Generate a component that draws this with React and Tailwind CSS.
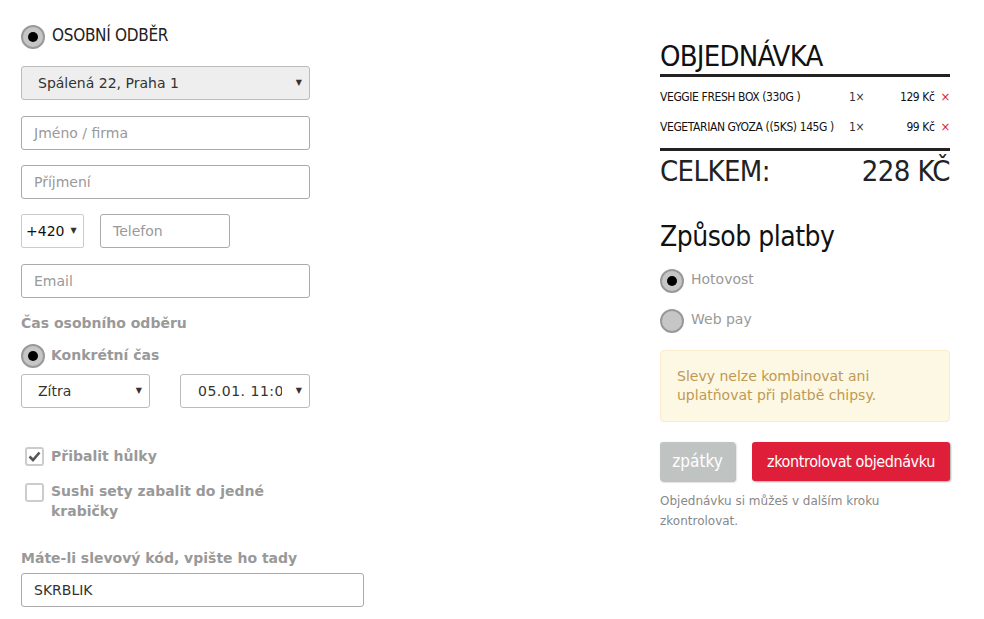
import React from "react";

const cond = "font-['DejaVu_Sans_Condensed','Roboto',sans-serif]";
const body = "font-['DejaVu_Sans','Verdana',sans-serif]";

const Radio = ({ checked }) => (
  <div className="w-6 h-6 shrink-0 rounded-full border-2 border-[#999] bg-[#c6c6c6] flex items-center justify-center">
    {checked && <div className="w-[10px] h-[10px] rounded-full bg-black" />}
  </div>
);

const Checkbox = ({ checked }) => (
  <div className="w-[19px] h-[19px] shrink-0 rounded-[3px] border-2 border-[#ccc] bg-white flex items-center justify-center">
    {checked && (
      <svg width="13" height="11" viewBox="0 0 13 11">
        <path d="M1.5 5.5 L5 9 L11.5 1.5" fill="none" stroke="#555" strokeWidth="2.6" />
      </svg>
    )}
  </div>
);

const Arrow = () => (
  <span className="text-[8px] text-[#333] leading-none">▼</span>
);

const Select = ({ children, className = "" }) => (
  <div
    className={`h-[34px] border border-[#bbb] rounded-[3px] flex items-center justify-between text-[14px] text-[#333] ${className}`}
  >
    {children}
  </div>
);

const Input = ({ placeholder, value, className = "w-[289px]" }) => (
  <div
    className={`h-[34px] border border-[#aaa] rounded-[3px] flex items-center px-3 text-[14px] ${
      value ? "text-[#333]" : "text-[#999]"
    } ${className}`}
  >
    {value || placeholder}
  </div>
);

export default function App() {
  return (
    <div className={`w-[984px] h-[619px] bg-white flex overflow-hidden ${body}`}>
      {/* left: contact form */}
      <div className="ml-[21px] w-[343px] flex flex-col">
        <div className="mt-[25px] flex items-center gap-[7px]">
          <Radio checked />
          <span className={`${cond} text-[17px] text-[#222] tracking-[-0.3px] -mt-[3px]`}>
            OSOBNÍ ODBĚR
          </span>
        </div>

        <Select className="mt-[17px] w-[289px] bg-[#eee] pl-[16px] pr-[7px]">
          <span>Spálená 22, Praha 1</span>
          <Arrow />
        </Select>

        <Input placeholder="Jméno / firma" className="mt-4 w-[289px]" />
        <Input placeholder="Příjmení" className="mt-[15px] w-[289px]" />

        <div className="mt-[15px] flex gap-[16px]">
          <div className="h-[34px] w-[63px] border border-[#ccc] rounded-[2px] flex items-center gap-[6px] pl-[4px] text-[14px] text-[#111]">
            <span>+420</span>
            <Arrow />
          </div>
          <Input placeholder="Telefon" className="w-[130px]" />
        </div>

        <Input placeholder="Email" className="mt-[16px] w-[289px]" />

        <div className="mt-[16px] text-[14px] font-bold text-[#999] leading-[18px]">
          Čas osobního odběru
        </div>

        <div className="mt-[12px] flex items-center gap-[6px]">
          <Radio checked />
          <span className="text-[14px] font-bold text-[#999] -mt-[2px]">Konkrétní čas</span>
        </div>

        <div className="mt-[6px] flex gap-[30px]">
          <Select className="w-[129px] h-[33px] pl-[16px] pr-[7px]">
            <span>Zítra</span>
            <Arrow />
          </Select>
          <Select className="w-[130px] h-[33px] pl-[17px] pr-[7px]">
            <span className="tracking-[0.5px] w-[84px] overflow-hidden whitespace-nowrap">05.01. 11:00</span>
            <Arrow />
          </Select>
        </div>

        <div className="mt-[38px] ml-[4px] flex items-center gap-[7px]">
          <Checkbox checked />
          <span className="text-[14px] font-bold text-[#999] leading-[20px]">Přibalit hůlky</span>
        </div>

        <div className="mt-[15px] ml-[4px] flex items-start gap-[7px]">
          <div className="mt-[2px]">
            <Checkbox />
          </div>
          <span className="text-[14px] font-bold text-[#999] leading-[20px] w-[230px]">
            Sushi sety zabalit do jedné krabičky
          </span>
        </div>

        <div className="mt-[28px] text-[14px] font-bold text-[#999] leading-[18px]">
          Máte-li slevový kód, vpište ho tady
        </div>
        <Input value="SKRBLIK" className="mt-[6px] w-[343px]" />
      </div>

      {/* right: order summary */}
      <div className="ml-auto mr-[34px] w-[290px] flex flex-col">
        <h1 className={`${cond} mt-[40px] text-[29px] leading-[33px] text-[#111] tracking-[-0.8px]`}>
          OBJEDNÁVKA
        </h1>
        <div className="mt-[1px] h-[3px] bg-[#222]" />

        <div className={`${cond} mt-[11px] flex flex-col gap-[12px] text-[12px] text-[#111] tracking-[-0.4px]`}>
          {[
            ["VEGGIE FRESH BOX (330G )", "129 Kč"],
            ["VEGETARIAN GYOZA ((5KS) 145G )", "99 Kč"],
          ].map(([name, price]) => (
            <div key={name} className="flex items-center h-[18px]">
              <span className="w-[189px] whitespace-nowrap">{name}</span>
              <span className="text-[#333]">1×</span>
              <span className="ml-auto">{price}</span>
              <span className="ml-[6px] text-[#e02030] text-[13px]">×</span>
            </div>
          ))}
        </div>

        <div className="mt-[12px] h-[3px] bg-[#222]" />

        <div className={`${cond} mt-[3px] flex justify-between text-[29px] leading-[34px] text-[#222] tracking-[-0.6px]`}>
          <span>CELKEM:</span>
          <span>228 KČ</span>
        </div>

        <h2 className={`${cond} mt-[33px] text-[28px] leading-[32px] text-[#111] tracking-[-0.5px]`}>
          Způsob platby
        </h2>

        <div className="mt-[16px] flex items-center gap-[7px]">
          <Radio checked />
          <span className="text-[14px] text-[#999] -mt-[4px]">Hotovost</span>
        </div>
        <div className="mt-[16px] flex items-center gap-[7px]">
          <Radio />
          <span className="text-[14px] text-[#999] -mt-[4px]">Web pay</span>
        </div>

        <div className="mt-[17px] bg-[#fcf8e3] border border-[#faebcc] rounded-[4px] px-[16px] py-[16px] text-[14px] leading-[19px] text-[#c09853]">
          Slevy nelze kombinovat ani uplatňovat při platbě chipsy.
        </div>

        <div className={`${cond} mt-[20px] flex gap-[17px]`}>
          <button className="h-[39px] w-[75px] rounded-[3px] bg-[#bfc4c3] text-white text-[17px] shadow-[1px_1px_2px_rgba(0,0,0,0.35)]">
            zpátky
          </button>
          <button className="h-[39px] w-[198px] rounded-[3px] bg-[#df1f3a] text-white text-[16px] tracking-[-0.4px] shadow-[1px_1px_2px_rgba(0,0,0,0.35)]">
            zkontrolovat objednávku
          </button>
        </div>

        <p className="mt-[10px] text-[12px] leading-[20px] text-[#888]">
          Objednávku si můžeš v dalším kroku zkontrolovat.
        </p>
      </div>
    </div>
  );
}
